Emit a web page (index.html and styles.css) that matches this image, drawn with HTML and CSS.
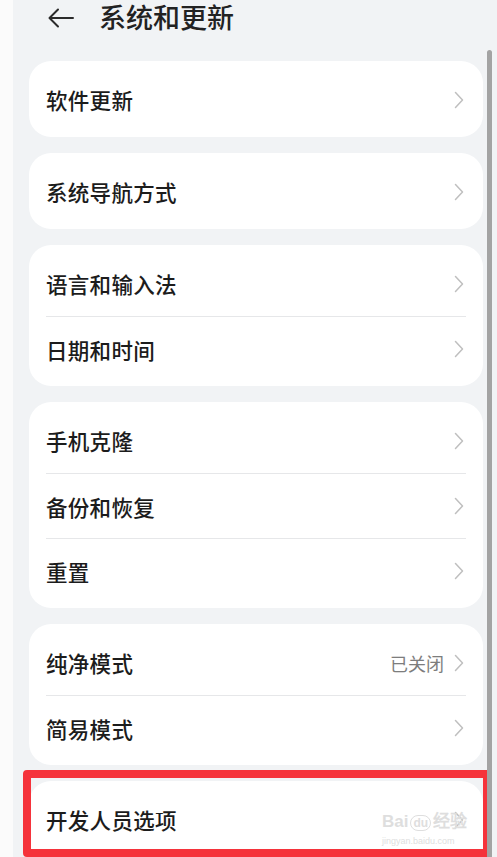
FILE: index.html
```html
<!DOCTYPE html>
<html lang="zh-CN">
<head>
  <meta charset="UTF-8">
  <meta name="viewport" content="width=device-width, initial-scale=1.0">
  <title>系统和更新</title>
  <link rel="stylesheet" href="styles.css">
</head>
<body>
  <div class="screen">
    <div class="header">
      <svg class="back" width="26" height="20" viewBox="0 0 26 20">
        <path d="M25 10H2M10 1.5L1.5 10L10 18.5" fill="none" stroke="#2b2b2b" stroke-width="2" stroke-linecap="round" stroke-linejoin="round"/>
      </svg>
      <div class="title">系统和更新</div>
    </div>

    <div class="card">
      <div class="row"><span class="label">软件更新</span><svg class="chev" viewBox="0 0 10 18"><path d="M1.5 1.5L8.5 9L1.5 16.5"/></svg></div>
    </div>

    <div class="card">
      <div class="row"><span class="label">系统导航方式</span><svg class="chev" viewBox="0 0 10 18"><path d="M1.5 1.5L8.5 9L1.5 16.5"/></svg></div>
    </div>

    <div class="card">
      <div class="row"><span class="label">语言和输入法</span><svg class="chev" viewBox="0 0 10 18"><path d="M1.5 1.5L8.5 9L1.5 16.5"/></svg></div>
      <div class="row"><span class="label">日期和时间</span><svg class="chev" viewBox="0 0 10 18"><path d="M1.5 1.5L8.5 9L1.5 16.5"/></svg></div>
    </div>

    <div class="card">
      <div class="row"><span class="label">手机克隆</span><svg class="chev" viewBox="0 0 10 18"><path d="M1.5 1.5L8.5 9L1.5 16.5"/></svg></div>
      <div class="row"><span class="label">备份和恢复</span><svg class="chev" viewBox="0 0 10 18"><path d="M1.5 1.5L8.5 9L1.5 16.5"/></svg></div>
      <div class="row"><span class="label">重置</span><svg class="chev" viewBox="0 0 10 18"><path d="M1.5 1.5L8.5 9L1.5 16.5"/></svg></div>
    </div>

    <div class="card">
      <div class="row"><span class="label">纯净模式</span><span class="value">已关闭</span><svg class="chev" viewBox="0 0 10 18"><path d="M1.5 1.5L8.5 9L1.5 16.5"/></svg></div>
      <div class="row"><span class="label">简易模式</span><svg class="chev" viewBox="0 0 10 18"><path d="M1.5 1.5L8.5 9L1.5 16.5"/></svg></div>
    </div>

    <div class="card">
      <div class="row"><span class="label">开发人员选项</span><svg class="chev" viewBox="0 0 10 18"><path d="M1.5 1.5L8.5 9L1.5 16.5"/></svg></div>
      <div class="row"><span class="label">&nbsp;</span></div>
    </div>

    <div class="highlight"></div>
    <div class="watermark">
      <div class="wm-logo">Bai<span class="wm-du">du</span>经验</div>
      <div class="wm-url">jingyan.baidu.com</div>
    </div>
    <div class="scrollbar"></div>
  </div>
</body>
</html>
```
FILE: styles.css
```css
html, body {
  margin: 0;
  height: 100%;
  overflow: hidden;
  background: #fbfbfb;
}

.screen {
  position: relative;
  margin-left: 13px;
  height: 857px;
  background: #f1f3f5;
  padding: 0 14px 0 16px;
  font-family: "Noto Sans CJK SC", "Noto Sans", sans-serif;
  color: #1c1c1c;
  overflow: hidden;
}

.header {
  display: flex;
  align-items: center;
  height: 34px;
  padding-left: 19px;
  margin-bottom: 27px;
}
.back {
  margin-top: 1px;
}
.title {
  margin-left: 25px;
  font-size: 27px;
  font-weight: 500;
  line-height: 30px;
  color: #222;
}

.card {
  background: #fff;
  border-radius: 22px;
  padding: 6px 0 5px;
  margin-bottom: 16px;
  width: 454px;
}

.row {
  display: flex;
  align-items: center;
  height: 65px;
  margin: 0 17px;
  border-top: 1px solid #e6e7e9;
  box-sizing: border-box;
}
.row:first-child {
  border-top: none;
}
.label {
  flex: 1;
  font-size: 21.5px;
  font-weight: 500;
  letter-spacing: 0.3px;
}
.value {
  font-size: 18px;
  color: #7d7d7d;
  margin-right: 10px;
}
.chev {
  width: 10px;
  height: 18px;
  margin-right: 2px;
  fill: none;
  stroke: #bfbfbf;
  stroke-width: 1.5;
  stroke-linecap: round;
  stroke-linejoin: round;
}

.highlight {
  position: absolute;
  left: 10px;
  top: 770px;
  width: 452px;
  height: 71px;
  border: 8px solid #f5333b;
  border-radius: 4px;
}

.watermark {
  position: absolute;
  left: 369px;
  top: 812px;
  color: #dedede;
  font-family: "Liberation Sans", sans-serif;
}
.wm-logo {
  font-size: 17px;
  font-weight: bold;
  line-height: 20px;
}
.wm-du {
  font-size: 12px;
  border: 1.5px solid #dedede;
  border-radius: 8px;
  padding: 0 2px;
  margin: 0 2px;
}
.wm-url {
  font-size: 9px;
  margin-top: 3px;
}

.scrollbar {
  position: absolute;
  left: 474px;
  top: 50px;
  width: 5px;
  height: 820px;
  border-radius: 3px;
  background: #a3a3a3;
}
```
